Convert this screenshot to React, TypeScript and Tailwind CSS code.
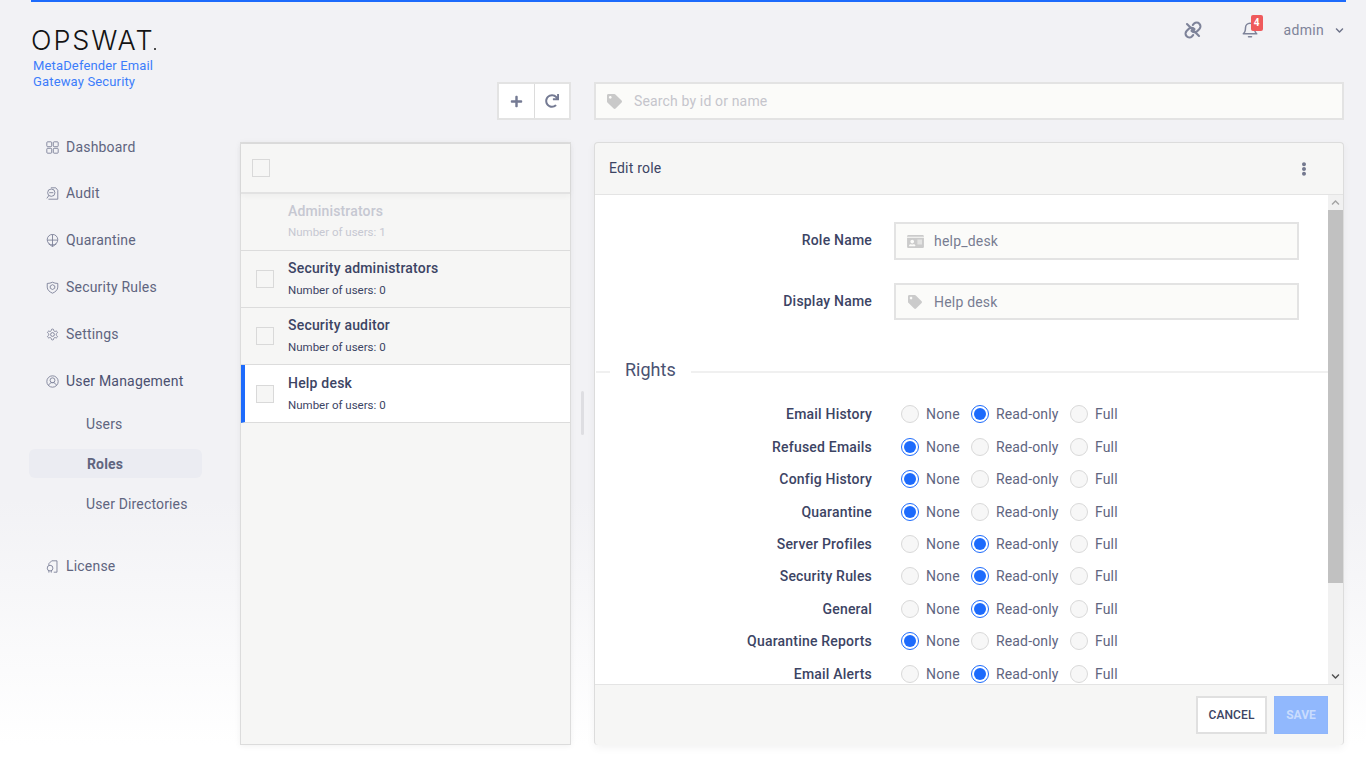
import { FaTag, FaIdCard, FaPlus, FaRedo, FaEllipsisV, FaChevronDown, FaChevronUp } from "react-icons/fa";
import { ReactNode } from "react";

const rob = "font-['Roboto',sans-serif]";

const Ico = ({ children, view = "0 0 16 16", sw = "1.1" }: { children: ReactNode; view?: string; sw?: string }) => (
  <svg viewBox={view} fill="none" stroke="#7c8098" strokeWidth={sw} className="w-[13px] h-[13px] shrink-0 mr-[7px]">
    {children}
  </svg>
);

const shield = "M8 1.500c2 1 4 1.500 6.500 1.500v4.500c0 3.500-3 6-6.500 7.500-3.500-1.500-6.500-4-6.500-7.500V3c2.500 0 4.500-.5 6.500-1.500z";

const nav: { label: string; mt: string; icon: ReactNode; view?: string; sw?: string }[] = [
  { label: "Dashboard", mt: "mt-0", icon: <><rect x="1" y="1" width="6" height="6" rx="1" /><rect x="9" y="1" width="6" height="6" rx="1" /><rect x="1" y="9" width="6" height="6" rx="1" /><rect x="9" y="9" width="6" height="6" rx="1" /></> },
  { label: "Audit", mt: "mt-[26px]", icon: <><path d="M6 1h6l2.500 3v11H3" /><circle cx="6.500" cy="7" r="4.500" /><path d="M3.500 10.500L1 14M4 7h5" /></> },
  { label: "Quarantine", mt: "mt-[27px]", icon: <><circle cx="8" cy="7" r="6.500" /><path d="M8 .5v15M1.500 7.500h13M3 12l5 3.500 5-3.500" /></> },
  { label: "Security Rules", mt: "mt-[27px]", icon: <><path d={shield} /><path d="M8 4.500l2.800 1.600v2.800L8 10.500 5.200 8.900V6.100z" /></> },
  { label: "Settings", mt: "mt-[27px]", view: "0 0 24 24", sw: "1.700", icon: <><path d="M12.220 2h-.44a2 2 0 0 0-2 2v.18a2 2 0 0 1-1 1.730l-.43.25a2 2 0 0 1-2 0l-.15-.08a2 2 0 0 0-2.730.73l-.22.380a2 2 0 0 0 .73 2.730l.15.100a2 2 0 0 1 1 1.720v.510a2 2 0 0 1-1 1.740l-.15.090a2 2 0 0 0-.73 2.730l.22.380a2 2 0 0 0 2.730.730l.15-.080a2 2 0 0 1 2 0l.43.250a2 2 0 0 1 1 1.730V20a2 2 0 0 0 2 2h.44a2 2 0 0 0 2-2v-.18a2 2 0 0 1 1-1.730l.43-.25a2 2 0 0 1 2 0l.15.080a2 2 0 0 0 2.730-.730l.22-.390a2 2 0 0 0-.73-2.730l-.15-.080a2 2 0 0 1-1-1.740v-.5a2 2 0 0 1 1-1.740l.15-.090a2 2 0 0 0 .73-2.730l-.22-.380a2 2 0 0 0-2.730-.730l-.15.080a2 2 0 0 1-2 0l-.43-.250a2 2 0 0 1-1-1.730V4a2 2 0 0 0-2-2z" /><circle cx="12" cy="12" r="3.500" /></> },
  { label: "User Management", mt: "mt-[27px]", icon: <><circle cx="8" cy="8" r="7" /><circle cx="8" cy="6.500" r="3" /><path d="M3.200 13c.8-2.800 2.700-3.700 4.800-3.700s4 .9 4.800 3.700" /></> },
];

const rows = ["Security administrators", "Security auditor"];

const rights: [string, number][] = [
  ["Email History", 1], ["Refused Emails", 0], ["Config History", 0], ["Quarantine", 0], ["Server Profiles", 1],
  ["Security Rules", 1], ["General", 1], ["Quarantine Reports", 0], ["Email Alerts", 1],
];

const Radio = ({ on }: { on: boolean }) =>
  on ? (
    <span className="w-[18px] h-[18px] rounded-full border border-[#1d6bfc] bg-white flex items-center justify-center shrink-0">
      <span className="w-[12px] h-[12px] rounded-full bg-[#1d6bfc]" />
    </span>
  ) : (
    <span className="w-[18px] h-[18px] rounded-full border border-[#d9d9d9] bg-[#f7f7f7] shrink-0" />
  );

const Field = ({ label, value, icon, cls }: { label: string; value: string; icon: ReactNode; cls: string }) => (
  <div className={`flex items-center ${cls}`}>
    <div className="w-[277px] text-right text-sm font-medium text-[#3c4464] pr-[1px] pb-[2px] tracking-[0.2px]">{label}</div>
    <div className="ml-[21px] w-[405px] flex items-center border-2 border-[#e3e3e3] bg-[#fbfbf9] text-[#787d92] text-sm h-full pl-[10px]">
      <span className="w-[18px] flex justify-center text-[#cbcbcb]">{icon}</span>
      <span className="ml-[10px] tracking-[0.2px]">{value}</span>
    </div>
  </div>
);

export default function App() {
  return (
    <div className={`w-[1366px] h-[768px] overflow-hidden bg-[linear-gradient(to_bottom,#f2f2f5_0%,#f2f2f5_65%,#ffffff_97%)] pl-[31px] pr-[20px] ${rob}`}>
      <div className="h-full border-t-2 border-[#1d6bfc] flex">
        {/* Sidebar */}
        <aside className="w-[209px] shrink-0 flex flex-col">
          <div className="mt-[25px] h-[28px] flex items-end text-[27px] leading-[28px] font-['Inter',sans-serif] font-light text-[#141414] tracking-[0.07em] whitespace-nowrap">
            <span>OPSWAT</span>
            <span className="w-[2px] h-[2px] rounded-full bg-[#141414] mb-[5px]" />
          </div>
          <div className="mt-[2px] pl-[2px] text-[13px] text-[#3c7dfb] tracking-[0.15px]">
            <div className="h-[16px] leading-[17px]">MetaDefender Email</div>
            <div className="h-[18px] leading-[17px]">Gateway Security</div>
          </div>
          <nav className="mt-[46px] text-sm leading-[18px] text-[#60657f]">
            {nav.map((n) => (
              <div key={n.label} className={`flex items-center pl-[15px] h-[20px] ${n.mt} ${n.label === "User Management" ? "text-[#4b5070]" : ""}`}>
                <Ico view={n.view} sw={n.sw}>{n.icon}</Ico>
                <span className="tracking-[0.2px]">{n.label}</span>
              </div>
            ))}
            <div className="mt-[18px] ml-[-2px] w-[173px] tracking-[0.15px]">
              <div className="h-[29px] pl-[57px] flex items-center">Users</div>
              <div className="mt-[11px] h-[29px] pl-[58px] flex items-center bg-[#ebecf2] rounded-[6px] font-bold">Roles</div>
              <div className="mt-[11px] h-[29px] pl-[57px] flex items-center">User Directories</div>
            </div>
            <div className="flex items-center pl-[15px] h-[20px] mt-[38px]">
              <Ico>
                <path d="M7 1h6.500v14h-4" /><path d="M7 1L3.500 4.500v2" /><circle cx="5" cy="10" r="3.500" /><path d="M3.500 13v2.500M6.500 13v2.500" />
              </Ico>
              <span className="tracking-[0.2px]">License</span>
            </div>
          </nav>
        </aside>

        {/* Main */}
        <main className="flex-1 flex flex-col min-w-0">
          <header className="h-[80px] relative flex justify-end items-start text-[#7e8399]">
            <div className="mt-[17px] flex items-center h-[22px]">
              <svg viewBox="0 0 24 24" fill="none" stroke="#7e8399" strokeWidth="2.800" strokeLinecap="round" strokeLinejoin="round" className="w-[18px] h-[18px]">
                <path d="M10 13a5 5 0 0 0 7.540.54l3-3a5 5 0 0 0-7.070-7.070l-1.720 1.710" />
                <path d="M14 11a5 5 0 0 0-7.540-.54l-3 3a5 5 0 0 0 7.070 7.070l1.710-1.710" />
                <path d="M4 4l16 16" />
              </svg>
              <div className="relative ml-[39px] w-[18px] h-[18px]">
                <svg viewBox="0 0 24 24" fill="none" stroke="#7e8399" strokeWidth="2" strokeLinecap="round" strokeLinejoin="round" className="w-[18px] h-[18px]">
                  <path d="M6 9a6 6 0 0 1 12 0c0 6 3 8 3 8H3s3-2 3-8" />
                  <path d="M10 21h4" />
                </svg>
                <span className="absolute left-[10px] top-[-6px] w-[12px] h-[16px] rounded-[2px] bg-[#ef5a5c] text-white text-[10px] leading-[16px] font-bold text-center">4</span>
              </div>
              <span className="ml-[25px] text-sm tracking-[0.3px]">admin</span>
              <FaChevronDown className="ml-[11px] mr-[2px] w-[9px] h-[9px] text-[#6e7389]" />
            </div>
          </header>

          <div className="flex h-[38px]">
            <div className="ml-[257px] w-[74px] flex border-2 border-[#e3e3e3] bg-white">
              <div className="flex-1 flex items-center justify-center border-r border-[#dcdcdc] text-[#747a93]">
                <FaPlus className="w-[13px] h-[13px]" />
              </div>
              <div className="flex-1 flex items-center justify-center text-[#747a93]">
                <FaRedo className="w-[14px] h-[14px]" />
              </div>
            </div>
            <div className="ml-[23px] w-[750px] flex items-center border-2 border-[#e3e3e3] bg-[#fbfbf9] pl-[11px]">
              <FaTag className="w-[15px] h-[15px] text-[#c9c9c9]" />
              <span className="ml-[12px] text-sm text-[#c5c5cc] tracking-[0.15px]">Search by id or name</span>
            </div>
          </div>

          <div className="flex mt-[22px] h-[603px]">
            {/* List */}
            <section className="w-[331px] border border-t-2 border-[#dcdcdc] bg-[#f6f6f5] shadow-[0_1px_6px_rgba(0,0,0,0.06)] flex flex-col">
              <div className="h-[50px] border-b-2 border-[#e2e2e2] flex items-center pl-[11px] shadow-[0_2px_6px_rgba(0,0,0,0.04)]">
                <span className="w-[18px] h-[18px] border border-[#d9d9d9]" />
              </div>
              <div className="h-[57px] border-b border-[#dcdcdc] pl-[47px] pt-[8px]">
                <div className="text-sm leading-[18px] font-medium text-[#c6c8d2] tracking-[0.15px]">Administrators</div>
                <div className="mt-[4px] text-[11.500px] leading-[16px] text-[#c6c8d2]">Number of users: 1</div>
              </div>
              {rows.map((r) => (
                <div key={r} className="h-[57px] border-b border-[#dcdcdc] flex items-center">
                  <span className="ml-[15px] w-[18px] h-[18px] border border-[#d9d9d9]" />
                  <div className="ml-[14px] pb-[2px]">
                    <div className="text-sm leading-[18px] font-medium text-[#3c4464] tracking-[0.2px]">{r}</div>
                    <div className="mt-[5px] text-[11.500px] leading-[16px] text-[#3c4464]">Number of users: 0</div>
                  </div>
                </div>
              ))}
              <div className="h-[58px] border-b border-[#dcdcdc] bg-white border-l-4 border-l-[#1d6bfc] flex items-center">
                <span className="ml-[11px] w-[18px] h-[18px] border border-[#d9d9d9] bg-[#f6f6f5]" />
                <div className="ml-[14px]">
                  <div className="text-sm leading-[18px] font-medium text-[#3c4464] tracking-[0.2px]">Help desk</div>
                  <div className="mt-[5px] text-[11.500px] leading-[16px] text-[#3c4464]">Number of users: 0</div>
                </div>
              </div>
            </section>

            {/* Splitter */}
            <div className="w-[23px] shrink-0 relative">
              <span className="absolute left-[10px] top-[249px] w-[3px] h-[44px] bg-[#dedee2] rounded-sm" />
            </div>

            {/* Edit panel */}
            <section className="w-[750px] border border-b-0 border-[#dcdcdc] rounded-[4px] bg-[#f6f6f5] shadow-[0_3px_8px_rgba(0,0,0,0.05)] flex flex-col overflow-hidden">
              <div className="h-[52px] shrink-0 flex items-center justify-between pl-[14px] pr-[32px] border-b border-[#e4e4e4]">
                <span className="text-sm text-[#3c4464] pb-[2px] tracking-[0.2px]">Edit role</span>
                <FaEllipsisV className="w-[14px] h-[14px] text-[#74798f]" />
              </div>
              <div className="flex h-[490px] shrink-0 bg-white border-b border-[#e4e4e4]">
                <div className="flex-1 overflow-hidden min-w-0 pl-[1px]">
                  <div className="pt-[27px] h-full">
                    <Field label="Role Name" value="help_desk" cls="h-[38px]" icon={<FaIdCard className="w-[17px] h-[15px]" />} />
                    <Field label="Display Name" value="Help desk" cls="h-[37px] mt-[23px]" icon={<FaTag className="w-[14px] h-[14px]" />} />
                    <div className="mt-[37px] flex items-center h-[26px]">
                      <span className="w-[14px] h-[2px] bg-[#f0f0f0] mt-[4px]" />
                      <span className="ml-[15px] text-lg text-[#4a5272]">Rights</span>
                      <span className="ml-[15px] flex-1 h-[2px] bg-[#f0f0f0] mt-[4px]" />
                    </div>
                    <div className="mt-[21.400px] flex flex-col gap-[12.400px]">
                      {rights.map(([name, v]) => (
                        <div key={name} className="flex items-center h-[20px]">
                          <div className="w-[276px] text-right text-sm font-medium text-[#3c4464] tracking-[0.2px]">{name}</div>
                          <div className="ml-[29px] flex items-center text-sm text-[#60657f] tracking-[0.15px]">
                            <Radio on={v === 0} />
                            <span className="ml-[7px] w-[45px]">None</span>
                            <Radio on={v === 1} />
                            <span className="ml-[7px] w-[74px]">Read-only</span>
                            <Radio on={v === 2} />
                            <span className="ml-[7px]">Full</span>
                          </div>
                        </div>
                      ))}
                    </div>
                  </div>
                </div>
                <div className="w-[15px] shrink-0 bg-[#f1f1f1] flex flex-col">
                  <div className="h-[15px] flex items-center justify-center"><FaChevronUp className="w-[9px] h-[9px] text-[#a3a3a3]" /></div>
                  <div className="h-[373px] bg-[#c1c1c1]" />
                  <div className="flex-1" />
                  <div className="h-[15px] flex items-center justify-center"><FaChevronDown className="w-[9px] h-[9px] text-[#505050]" /></div>
                </div>
              </div>
              <div className="flex-1 flex items-start justify-end pr-[15px] pt-[11px]">
                <button className="w-[71px] h-[38px] border-2 border-[#e0e0e0] bg-white text-xs font-medium text-[#3c4464] tracking-[0.1px]">CANCEL</button>
                <button className="ml-[7px] w-[54px] h-[38px] border border-[#8fb6fb] bg-[#91b8fd] text-xs font-bold text-[#c9dcfd]">SAVE</button>
              </div>
            </section>
          </div>
        </main>
      </div>
    </div>
  );
}
